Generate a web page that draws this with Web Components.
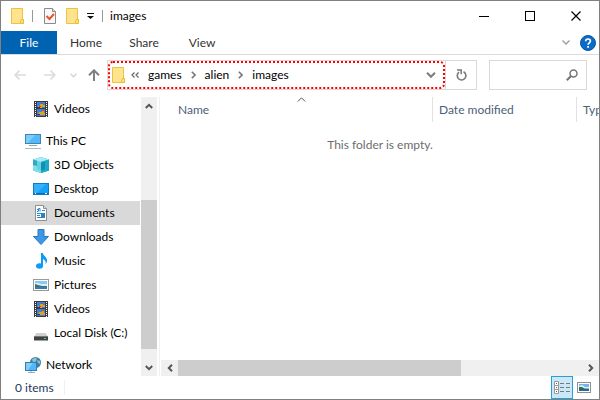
<!DOCTYPE html>
<html lang="en">
<head>
<meta charset="utf-8">
<title>images</title>
<style>
    html, body
    {
        margin: 0;
        height: 100%;
    }

    body
    {
        font: 12px/16px Lato, "Open Sans", sans-serif;
        color: #000;
        background: #fff;
    }
</style>
</head>
<body>
<explorer-window></explorer-window>

<script>
(function(){

//Every icon is drawn on its own pixel grid: [width, height, markup]
const film = `
    <rect x="1" y="0" width="14" height="16" fill="#3b3b3b"/>
    <path d="M2.5 1v15M13.5 1v15" stroke="#fff" stroke-width="1" stroke-dasharray="1 1"/>
    <rect x="4" y="1" width="8" height="6" fill="#3f7fe0"/>
    <rect x="4" y="8" width="8" height="7" fill="#3f7fe0"/>
    <path d="M5 5h2V3h3v1h2v2H9v1H5zM5 12h1v-1h3v-1h2v2h1v2H7v-1H5z" fill="#d9a520"/>
    <path d="M8 2h2v1H8zM9 9h2v1H9zM6 5h2v1H6z" fill="#c8452c"/>
    <path d="M4 6h3v1H4zM4 13h3v1H4z" fill="#173a80"/>`;

const picture = `
    <rect x="0.5" y="0.5" width="15" height="11" fill="#fff" stroke="#9a9a9a"/>
    <rect x="2" y="2" width="12" height="8" fill="#8cc9f2"/>
    <path d="M2 4h3l3 1h6v2H2z" fill="#d9effa"/>
    <path d="M2 5l3 1 4 1 5 0v1H2z" fill="#3d7565"/>
    <path d="M2 8h12v2H2z" fill="#3a79b4"/>`;

const folder = `
    <path d="M0.5 0.5h11v11h1v4h-12z" fill="#ffe38f" stroke="#ecc341"/>
    <path d="M10.5 11.5h2v4h-3v-2z" fill="#ffe07c" stroke="#e8bd38"/>`;

const icons = {
    folder: [13, 16, folder],
    properties: [12, 16, `
        <path d="M0.5 0.5h8l3 3v12h-11z" fill="#f8f8f8" stroke="#8b8b8b"/>
        <path d="M8.5 0.5v3h3" fill="#ddd" stroke="#8b8b8b"/>
        <path d="M2.5 8l3 3 4.500-5" fill="none" stroke="#e8542a" stroke-width="2"/>`],
    customize: [7, 6, `<path d="M0 0h7v1H0zM0 3h7L3.500 6z" fill="#111"/>`],
    minimize: [10, 10, `<path d="M0 5.500h10" stroke="#000"/>`],
    maximize: [10, 10, `<rect x="0.5" y="0.5" width="9" height="9" fill="none" stroke="#000"/>`],
    close: [10, 10, `<path d="M0.500 0.500l9 9M9.500 0.500l-9 9" stroke="#000" stroke-width="1.2"/>`],
    ribbon: [8, 5, `<path d="M0.500 0.500L4 4l3.500-3.500" fill="none" stroke="#9b9b9b" stroke-width="1.3"/>`],
    help: [16, 16, `
        <circle cx="8" cy="8" r="7.500" fill="#0a6cc8" stroke="#0b55a3"/>
        <path d="M5.700 6.200C5.700 3.300 10.400 3.300 10.400 6c0 1.800-2.300 1.800-2.300 3.800" fill="none" stroke="#fff" stroke-width="1.700"/>
        <path d="M7.200 11h1.800v1.800H7.200z" fill="#fff"/>`],
    back: [12, 10, `<path d="M12 5H1.500M5.500 0.700L1.200 5l4.300 4.300" fill="none" stroke="#dcdcdc" stroke-width="1.700"/>`],
    forward: [12, 10, `<path d="M0 5h10.500M6.500 0.700L10.800 5 6.500 9.300" fill="none" stroke="#dcdcdc" stroke-width="1.700"/>`],
    recent: [7, 5, `<path d="M0.500 0.800l3 2.900 3-2.900" fill="none" stroke="#d4d4d4" stroke-width="1.500"/>`],
    up: [12, 12, `<path d="M6 12V1.500M1 6.300l5-5 5 5" fill="none" stroke="#808080" stroke-width="2"/>`],
    overflow: [8, 6, `<path d="M3.500 0.500L1 3l2.500 2.500M7.500 0.500L5 3l2.500 2.500" fill="none" stroke="#666" stroke-width="1.200"/>`],
    chevron: [5, 8, `<path d="M0.800 0.800L4 4 0.800 7.200" fill="none" stroke="#777" stroke-width="1.600"/>`],
    drop: [10, 6, `<path d="M1 0.800l4 4 4-4" fill="none" stroke="#7c7c7c" stroke-width="2"/>`],
    refresh: [11, 12, `
        <path d="M7.500 2.800A4.300 4.300 0 1 1 3 3.200" fill="none" stroke="#7a7a7a" stroke-width="1.600"/>
        <path d="M1 1h4.200v4.200" fill="none" stroke="#7a7a7a" stroke-width="1.500"/>`],
    search: [12, 12, `
        <circle cx="7.500" cy="4.500" r="3.500" fill="none" stroke="#757575" stroke-width="1.500"/>
        <path d="M5 7L0.800 11.200" stroke="#757575" stroke-width="2"/>`],
    sort: [9, 5, `<path d="M0.800 4.500l3.700-3.700 3.700 3.700" fill="none" stroke="#555"/>`],
    videos: [16, 16, film],
    pc: [16, 16, `
        <rect x="0.5" y="1.500" width="15" height="9" fill="#55b9f8" stroke="#3a84b8"/>
        <path d="M1 2h9L3 10H1z" fill="#7dcdfb"/>
        <path d="M6 12h4v1H6z" fill="#9fbccb"/>
        <path d="M0 15h16v1H0z" fill="#a9bdc8"/>
        <path d="M4 12.500h8" stroke="#8da4b1"/>`],
    objects: [16, 16, `
        <path d="M8 0l8 2.500v11L8 16l-8-2.500v-11z" fill="#32b4cc"/>
        <path d="M8 0l8 2.500L8 5 0 2.500z" fill="#a6edf3"/>
        <path d="M0 2.500L8 5v11l-8-2.500z" fill="#7fdfe8"/>
        <path d="M8 5l8-2.500v11L8 16z" fill="#1ba9c8"/>
        <path d="M0 2.500l4 1.300V9l-4-1z" fill="#2fa9c6"/>
        <path d="M4 4.500l4 1.300v8l-4-1.600z" fill="#5fd3e0"/>
        <path d="M8 5.800l4-1.300v7.700l-4 1.600z" fill="#128fb2"/>`],
    desktop: [16, 12, `
        <rect x="0.5" y="0.5" width="15" height="11" fill="#14a0f8" stroke="#1278c0"/>
        <path d="M1 1h12L4 10H1z" fill="#34b0fc"/>
        <path d="M1 10h14v1H1z" fill="#0b6db0"/>
        <path d="M2 10.500h1M12 10.500h2" stroke="#fff"/>`],
    documents: [12, 16, `
        <path d="M0.500 0.500h8l3 3v12h-11z" fill="#fff" stroke="#8f8f8f"/>
        <path d="M8.500 0.500v3h3" fill="#ddd" stroke="#8f8f8f"/>
        <path d="M2 6.500h1.500M3.500 6V3.500H5V6.500M7 5.500h3M2 8.500h8M2 10.500h3M2 12.500h8M2 4.500h1" fill="none" stroke="#2488d0"/>
        <path d="M6 9h4v3H6z" fill="#3c7da8"/>`],
    downloads: [16, 16, `<path d="M5 0.500h6v7h4.500L8 15.500 0.500 7.500H5z" fill="#3d98e8" stroke="#2878bd"/>`],
    music: [11, 16, `
        <ellipse cx="3.500" cy="13" rx="3.500" ry="2.800" fill="#0c9cf4"/>
        <path d="M5 0h2c0 3 4 3.500 4 7.500 0 1.500-.5 2.500-1.500 3.500.500-3-.5-4-2.500-5v7H5z" fill="#0c9cf4"/>`],
    pictures: [16, 12, picture],
    disk: [14, 16, `
        <path d="M2.500 8h9l2.500 3.500H0z" fill="#d0d0d0"/>
        <path d="M0 11h14v4.500H0z" fill="#424242"/>
        <path d="M0 11.500h14" stroke="#777"/>
        <path d="M10 13h2v1h-2z" fill="#3be26a"/>`],
    network: [16, 16, `
        <circle cx="10.500" cy="5.500" r="5.500" fill="#3f7f9c"/>
        <path d="M7 2.500l3-2 2 1-1 3-3 1zM12 3l3 1v3l-2-1z" fill="#8bc1d5"/>
        <rect x="0.500" y="5.500" width="11" height="8" fill="#50b8f8" stroke="#2f7db2"/>
        <path d="M1 6h7l-5 7H1z" fill="#80cffb"/>
        <path d="M3 15.500h7M6 14v1" stroke="#93afbd"/>`],
    details: [16, 13, `
        <path d="M0.500 0.500h4v4h-4zM0.500 4.500h4v4h-4zM0.500 8.500h4v4h-4z" fill="#fff" stroke="#989898"/>
        <path d="M2 2h1v1H2z" fill="#4a7a50"/>
        <path d="M2 6h1v1H2z" fill="#3573b8"/>
        <path d="M2 10h1v1H2z" fill="#c03434"/>
        <path d="M6 2.500h4M12 2.500h4M6 6.500h4M12 6.500h4M6 10.500h4M12 10.500h4" stroke="#6e7c84"/>`],
    large: [14, 11, `
        <rect x="0.500" y="0.500" width="13" height="10" fill="#fff" stroke="#8f8f8f"/>
        <rect x="2" y="2" width="10" height="7" fill="#76b5ec"/>
        <path d="M2 4l3-1 3 2h4v1H2z" fill="#d9eefa"/>
        <path d="M2 5l3 0 3 2h4v1H2z" fill="#356b50"/>
        <path d="M2 8h10v1H2z" fill="#2c67a2"/>`],
    arrowup: [8, 6, `<path d="M0.800 5L4 1.800 7.200 5" fill="none" stroke="#555" stroke-width="2"/>`],
    arrowdown: [8, 6, `<path d="M0.800 1L4 4.200 7.200 1" fill="none" stroke="#555" stroke-width="2"/>`],
    arrowleft: [6, 8, `<path d="M5 0.800L1.800 4 5 7.200" fill="none" stroke="#555" stroke-width="2"/>`],
    arrowright: [6, 8, `<path d="M1 0.800L4.200 4 1 7.200" fill="none" stroke="#555" stroke-width="2"/>`]
};

//Shared by every element that has buttons
const reset = `
    *{ box-sizing: border-box; }

    button
    {
        display: flex;
        align-items: center;
        justify-content: center;
        margin: 0;
        padding: 0;
        border: 0;
        background: none;
        color: inherit;
        font: inherit;
    }`;

function define(name, html, ready)
{
    const template = document.createElement('template');
    template.innerHTML = html;

    customElements.define(name, class extends HTMLElement {
        constructor()
        {
            super();

            this._shadowRoot = this.attachShadow({mode: 'open'});
            this._shadowRoot.appendChild(template.content.cloneNode(true));
        }

        connectedCallback()
        {
            if(ready)
                ready(this, this._shadowRoot);
        }
    });
}

function makeIcon(name)
{
    const icon = document.createElement('ui-icon');
    icon.setAttribute('name', name);
    return icon;
}

define('ui-icon', `
<style>
    :host
    {
        display: inline-flex;
        flex: none;
    }

    svg{ display: block; }
</style>
<span></span>`, (host, root) => {
    const [w, h, body] = icons[host.getAttribute('name')];
    root.querySelector('span').innerHTML = `<svg width="${w}" height="${h}" viewBox="0 0 ${w} ${h}" aria-hidden="true">${body}</svg>`;
});

define('title-bar', `
<style>
    ${reset}
    :host
    {
        display: flex;
        align-items: center;
        height: 30px;
        padding-left: 10px;
    }

    .quick
    {
        display: flex;
        align-items: center;
        gap: 8px;
    }

    .quick button:nth-of-type(1){ margin: 0 2px 0 3px; }

    i
    {
        width: 1px;
        height: 12px;
        background: #999;
    }

    h1
    {
        flex: 1;
        margin: 0 0 0 7px;
        font: inherit;
    }

    .caption button
    {
        width: 46px;
        height: 30px;
    }

    .caption{ display: flex; }
</style>
<div class="quick">
    <ui-icon name="folder"></ui-icon>
    <i></i>
    <button aria-label="Properties"><ui-icon name="properties"></ui-icon></button>
    <button aria-label="New folder"><ui-icon name="folder"></ui-icon></button>
    <button aria-label="Customize toolbar"><ui-icon name="customize"></ui-icon></button>
    <i></i>
</div>
<h1><slot></slot></h1>
<div class="caption">
    <button aria-label="Minimize"><ui-icon name="minimize"></ui-icon></button>
    <button aria-label="Maximize"><ui-icon name="maximize"></ui-icon></button>
    <button aria-label="Close"><ui-icon name="close"></ui-icon></button>
</div>`);

define('ribbon-tabs', `
<style>
    ${reset}
    :host
    {
        display: flex;
        box-sizing: border-box;
        height: 24px;
        padding-right: 3px;
        border-bottom: 1px solid #dadbdc;
        color: #333;
    }

    button{ width: 58px; }

    .file
    {
        width: 56px;
        background: #0063b1;
        color: #fff;
    }

    span{ flex: 1; }

    .collapse{ width: 24px; }

    .help{ width: 16px; margin-left: 2px; }
</style>
<button class="file">File</button>
<button>Home</button>
<button>Share</button>
<button>View</button>
<span></span>
<button class="collapse" aria-label="Minimize the ribbon"><ui-icon name="ribbon"></ui-icon></button>
<button class="help" aria-label="Help"><ui-icon name="help"></ui-icon></button>`);

define('address-bar', `
<style>
    ${reset}
    :host
    {
        display: flex;
        align-items: center;
        box-sizing: border-box;
        height: 42px;
        padding: 0 12px 2px 13px;
    }

    nav
    {
        display: flex;
        align-items: center;
        width: 93px;
        gap: 18px;
    }

    nav button:nth-child(3){ margin: 0 -7px 0 -4px; }

    .path
    {
        position: relative;
        display: flex;
        flex: 1;
        align-items: center;
        height: 30px;
        padding: 0 9px 0 4px;
        border: 1px solid #d9d9d9;
    }

    .path svg
    {
        position: absolute;
        inset: 0;
        width: 100%;
        height: 100%;
        pointer-events: none;
    }

    ol
    {
        display: flex;
        flex: 1;
        align-items: center;
        gap: 9px;
        margin: 0 0 0 6px;
        padding: 0;
        list-style: none;
    }

    li
    {
        display: flex;
        align-items: center;
        gap: 9px;
    }

    a
    {
        color: inherit;
        text-decoration: none;
    }

    .refresh
    {
        width: 31px;
        height: 30px;
        border: 1px solid #d9d9d9;
        border-left: 0;
    }

    .search
    {
        display: flex;
        align-items: center;
        width: 98px;
        height: 30px;
        margin-left: 12px;
        padding-right: 8px;
        border: 1px solid #d9d9d9;
    }

    input
    {
        flex: 1;
        min-width: 0;
        height: 24px;
        border: 0;
        outline: 0;
        background: none;
        font: inherit;
    }
</style>
<nav aria-label="History">
    <button disabled aria-label="Back"><ui-icon name="back"></ui-icon></button>
    <button disabled aria-label="Forward"><ui-icon name="forward"></ui-icon></button>
    <button disabled aria-label="Recent locations"><ui-icon name="recent"></ui-icon></button>
    <button aria-label="Up"><ui-icon name="up"></ui-icon></button>
</nav>
<div class="path">
    <ui-icon name="folder"></ui-icon>
    <ol>
        <li><ui-icon name="overflow"></ui-icon></li>
        <li><a href="#games">games</a><ui-icon name="chevron"></ui-icon></li>
        <li><a href="#alien">alien</a><ui-icon name="chevron"></ui-icon></li>
        <li><a href="#images">images</a></li>
    </ol>
    <button aria-label="Previous locations"><ui-icon name="drop"></ui-icon></button>
    <svg aria-hidden="true"><rect x="1" y="1" rx="4" fill="none" stroke="#f00" stroke-width="2" stroke-dasharray="2 2" style="width: calc(100% - 2px); height: calc(100% - 2px)"/></svg>
</div>
<button class="refresh" aria-label="Refresh"><ui-icon name="refresh"></ui-icon></button>
<label class="search"><input type="search" aria-label="Search images"><ui-icon name="search"></ui-icon></label>`);

//start and size are the thumb's place along the track, in percent
define('scroll-bar', `
<style>
    ${reset}
    :host
    {
        display: flex;
        flex: none;
        background: #f0f0f0;
    }

    :host([vertical])
    {
        flex-direction: column;
        width: 16px;
    }

    :host(:not([vertical])){ height: 16px; }

    button
    {
        flex: none;
        width: 17px;
        height: 17px;
    }

    :host([vertical]) button{ width: 16px; }

    :host(:not([vertical])) button{ height: 16px; }

    .track
    {
        display: flex;
        flex: 1;
        flex-direction: inherit;
    }

    .thumb{ background: #cdcdcd; }
</style>
<button tabindex="-1" aria-label="Scroll back"></button>
<div class="track"><div class="before"></div><div class="thumb"></div></div>
<button tabindex="-1" aria-label="Scroll on"></button>`, (host, root) => {
    const vertical = host.hasAttribute('vertical');
    const names = vertical ? ['arrowup', 'arrowdown'] : ['arrowleft', 'arrowright'];
    root.querySelectorAll('button').forEach((button, i) => button.replaceChildren(makeIcon(names[i])));
    root.querySelector('.before').style.flexBasis = host.getAttribute('start') + '%';
    root.querySelector('.thumb').style.flexBasis = host.getAttribute('size') + '%';
});

define('tree-item', `
<style>
    :host
    {
        display: block;
        flex: none;
    }

    :host([root]){ margin: 8px 0 0; }

    :host([root]) a{ padding-left: 24px; }

    :host([selected]){ background: #d9d9d9; }

    a
    {
        display: flex;
        align-items: center;
        gap: 5px;
        height: 24px;
        padding-left: 32px;
        color: inherit;
        text-decoration: none;
        white-space: nowrap;
    }

    .icon
    {
        display: flex;
        justify-content: center;
        width: 16px;
    }
</style>
<a href="#"><span class="icon"></span><slot></slot></a>`, (host, root) => {
    root.querySelector('.icon').replaceChildren(makeIcon(host.getAttribute('icon')));
});

define('folder-tree', `
<style>
    :host
    {
        display: flex;
        flex: none;
        gap: 1px;
        width: 156px;
        min-height: 0;
    }

    nav
    {
        display: flex;
        flex: 1;
        flex-direction: column;
        min-width: 0;
        overflow: hidden;
    }
</style>
<nav aria-label="Folders"><slot></slot></nav>
<scroll-bar vertical start="35" size="61"></scroll-bar>`);

define('file-list', `
<style>
    :host
    {
        display: flex;
        flex: 1;
        flex-direction: column;
        min-width: 0;
        margin-left: 2px;
        border-left: 1px solid #f0f0f0;
        padding-left: 1px;
    }

    .view
    {
        flex: 1;
        min-height: 0;
        overflow: hidden;
    }

    table
    {
        width: 560px;
        table-layout: fixed;
        border-spacing: 0;
    }

    th
    {
        position: relative;
        box-sizing: border-box;
        width: 144px;
        height: 25px;
        padding: 0 0 0 6px;
        border-right: 1px solid #e2e2e2;
        color: #4c607a;
        font-weight: normal;
        text-align: left;
    }

    th:nth-child(1)
    {
        width: 272px;
        padding-left: 17px;
    }

    th ui-icon
    {
        position: absolute;
        top: 0;
        left: 50%;
    }

    p
    {
        margin: 15px 0 0;
        color: #6d6d6d;
        text-align: center;
    }
</style>
<div class="view">
    <table>
        <thead>
            <tr><th aria-sort="ascending">Name<ui-icon name="sort"></ui-icon></th><th>Date modified</th><th>Type</th></tr>
        </thead>
    </table>
    <p>This folder is empty.</p>
</div>
<scroll-bar start="0" size="70"></scroll-bar>`);

define('status-bar', `
<style>
    ${reset}
    :host
    {
        display: flex;
        align-items: center;
        height: 23px;
        padding: 0 4px 0 14px;
        color: #1e395b;
    }

    .count
    {
        flex: 1;
    }

    .count span
    {
        padding-right: 10px;
        border-right: 1px solid #f0f0f0;
    }

    button
    {
        width: 22px;
        height: 23px;
    }

    [aria-pressed=true]
    {
        background: #cce8f7;
        border: 1px solid #26a0da;
    }
</style>
<div class="count"><span><slot></slot></span></div>
<button aria-pressed="true" aria-label="Details"><ui-icon name="details"></ui-icon></button>
<button aria-pressed="false" aria-label="Large icons"><ui-icon name="large"></ui-icon></button>`);

define('explorer-window', `
<style>
    :host
    {
        display: flex;
        flex-direction: column;
        box-sizing: border-box;
        height: 100vh;
        border: 1px solid #808080;
        overflow: hidden;
    }

    main
    {
        display: flex;
        flex: 1;
        min-height: 0;
    }
</style>
<title-bar>images</title-bar>
<ribbon-tabs></ribbon-tabs>
<address-bar></address-bar>
<main>
    <folder-tree>
        <tree-item icon="videos">Videos</tree-item>
        <tree-item root icon="pc">This PC</tree-item>
        <tree-item icon="objects">3D Objects</tree-item>
        <tree-item icon="desktop">Desktop</tree-item>
        <tree-item icon="documents" selected>Documents</tree-item>
        <tree-item icon="downloads">Downloads</tree-item>
        <tree-item icon="music">Music</tree-item>
        <tree-item icon="pictures">Pictures</tree-item>
        <tree-item icon="videos">Videos</tree-item>
        <tree-item icon="disk">Local Disk (C:)</tree-item>
        <tree-item root icon="network">Network</tree-item>
    </folder-tree>
    <file-list></file-list>
</main>
<status-bar>0 items</status-bar>`);

})();
</script>
</body>
</html>
